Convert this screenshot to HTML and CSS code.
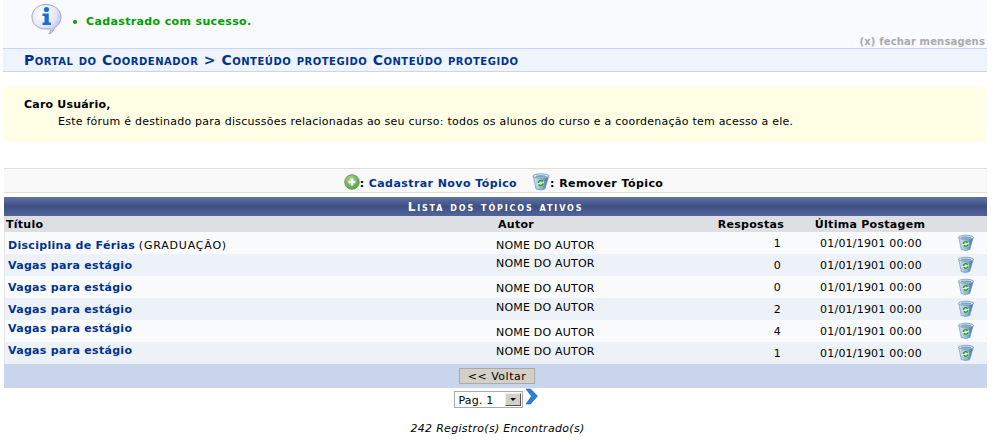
FILE: index.html
```html
<!DOCTYPE html>
<html lang="pt-BR">
<head>
    <meta charset="UTF-8">
    <title>Portal do Coordenador</title>
    <link rel="stylesheet" href="styles.css">
</head>
<body>
    <svg class="icon-defs" width="0" height="0">
        <defs>
            <linearGradient id="binBody" x1="0" y1="0" x2="1" y2="0">
                <stop offset="0" stop-color="#d5e6f2"/>
                <stop offset="0.55" stop-color="#8ab6dc"/>
                <stop offset="1" stop-color="#35679c"/>
            </linearGradient>
            <radialGradient id="bubble" cx="0.35" cy="0.3" r="0.8">
                <stop offset="0" stop-color="#ffffff"/>
                <stop offset="0.6" stop-color="#e4e6f8"/>
                <stop offset="1" stop-color="#a9aee0"/>
            </radialGradient>
            <radialGradient id="greenBall" cx="0.4" cy="0.3" r="0.8">
                <stop offset="0" stop-color="#a5d890"/>
                <stop offset="1" stop-color="#4e9a3c"/>
            </radialGradient>
            <symbol id="bin" viewBox="0 0 17 18">
                <path d="M0.800 3 L3.500 16 Q8 18 12.500 16 L16.200 3 Z" fill="url(#binBody)" stroke="#6d93b5" stroke-width="0.7"/>
                <ellipse cx="8.500" cy="3" rx="8" ry="2.200" fill="#dcebf5" stroke="#6d93b5" stroke-width="0.8"/>
                <ellipse cx="8.500" cy="3.300" rx="5.800" ry="1.200" fill="#7fa3bf"/>
                <circle cx="8.200" cy="10" r="3.400" fill="#dff0e0"/>
                <path d="M5.800 10 A2.500 2.500 0 0 1 10.400 8.700 M10.600 10.300 A2.500 2.500 0 0 1 6.100 11.500" fill="none" stroke="#2f9e33" stroke-width="1.800"/>
            </symbol>
        </defs>
    </svg>

    <div class="container">
        <div class="messages">
            <svg class="info-icon" width="32" height="32" viewBox="0 0 32 32">
                <path d="M15 1.500 C23.500 1.500 30 7 30 14 C30 19 27 22.500 23.500 24.500 C23 27 21.500 30 18 31 C19.500 29 19.500 27 19 25.800 C17.800 26 16.400 26 15 26 C7 26 1 21 1 14 C1 7 7 1.500 15 1.500 Z" fill="url(#bubble)" stroke="#a4a6c0" stroke-width="1"/>
                <circle cx="15.500" cy="6.500" r="2.600" fill="#1a6fd0"/>
                <path d="M11.500 10.500 H17.800 V19.500 H20 V22 H11.500 V19.500 H13.500 V13 H11.500 Z" fill="#1a6fd0"/>
            </svg>
            <ul class="message-list">
                <li>Cadastrado com sucesso.</li>
            </ul>
            <a class="close-messages" href="#">(x) fechar mensagens</a>
        </div>

        <h2 class="page-title">Portal do Coordenador &gt; Conteúdo protegido Conteúdo protegido</h2>

        <div class="notice">
            <p class="notice-title">Caro Usuário,</p>
            <p class="notice-text">Este fórum é destinado para discussões relacionadas ao seu curso: todos os alunos do curso e a coordenação tem acesso a ele.</p>
        </div>

        <div class="actions">
            <svg class="plus-icon" width="16" height="16" viewBox="0 0 16 16">
                <circle cx="8" cy="8" r="7.300" fill="url(#greenBall)" stroke="#5c8f50" stroke-width="0.8"/>
                <path d="M8 4.500 V11.500 M4.500 8 H11.500" stroke="#ffffff" stroke-width="2.400"/>
            </svg>
            <span class="action-text">: <a href="#">Cadastrar Novo Tópico</a></span>
            <svg class="bin-large" width="18" height="18"><use href="#bin"/></svg>
            <span class="action-text">: Remover Tópico</span>
        </div>

        <table class="topics">
            <caption>Lista dos tópicos ativos</caption>
            <colgroup>
                <col class="col-title">
                <col class="col-author">
                <col class="col-replies">
                <col class="col-date">
                <col class="col-icon">
            </colgroup>
            <thead>
                <tr>
                    <th class="title-head">Título</th>
                    <th class="author-head">Autor</th>
                    <th class="replies-head">Respostas</th>
                    <th>Última Postagem</th>
                    <th></th>
                </tr>
            </thead>
            <tbody>
                <tr>
                    <td class="lower"><a href="#">Disciplina de Férias</a> <span class="level">(GRADUAÇÃO)</span></td>
                    <td class="lower">NOME DO AUTOR</td>
                    <td class="replies">1</td>
                    <td class="date">01/01/1901 00:00</td>
                    <td class="bin-cell"><svg width="16" height="18"><use href="#bin"/></svg></td>
                </tr>
                <tr class="even">
                    <td><a href="#">Vagas para estágio</a></td>
                    <td class="high">NOME DO AUTOR</td>
                    <td class="replies">0</td>
                    <td class="date">01/01/1901 00:00</td>
                    <td class="bin-cell"><svg width="16" height="18"><use href="#bin"/></svg></td>
                </tr>
                <tr>
                    <td><a href="#">Vagas para estágio</a></td>
                    <td class="low">NOME DO AUTOR</td>
                    <td class="replies">0</td>
                    <td class="date">01/01/1901 00:00</td>
                    <td class="bin-cell"><svg width="16" height="18"><use href="#bin"/></svg></td>
                </tr>
                <tr class="even">
                    <td><a href="#">Vagas para estágio</a></td>
                    <td class="high">NOME DO AUTOR</td>
                    <td class="replies">2</td>
                    <td class="date">01/01/1901 00:00</td>
                    <td class="bin-cell"><svg width="16" height="18"><use href="#bin"/></svg></td>
                </tr>
                <tr>
                    <td class="higher"><a href="#">Vagas para estágio</a></td>
                    <td class="low">NOME DO AUTOR</td>
                    <td class="replies">4</td>
                    <td class="date">01/01/1901 00:00</td>
                    <td class="bin-cell"><svg width="16" height="18"><use href="#bin"/></svg></td>
                </tr>
                <tr class="even">
                    <td class="higher"><a href="#">Vagas para estágio</a></td>
                    <td class="high">NOME DO AUTOR</td>
                    <td class="replies">1</td>
                    <td class="date">01/01/1901 00:00</td>
                    <td class="bin-cell"><svg width="16" height="18"><use href="#bin"/></svg></td>
                </tr>
            </tbody>
            <tfoot>
                <tr>
                    <td colspan="5"><button class="back-button">&lt;&lt; Voltar</button></td>
                </tr>
            </tfoot>
        </table>

        <div class="pager">
            <div class="page-select">
                <span class="page-value">Pag. 1</span>
                <span class="page-arrow"></span>
            </div>
            <svg class="next-icon" width="13" height="17" viewBox="0 0 13 17">
                <path d="M1 1 H5.500 L12.500 8 L5.500 16 H1 L6.500 8.200 Z" fill="#2a7fd8" stroke="#1b5da8" stroke-width="0.6"/>
            </svg>
        </div>

        <p class="records">242 Registro(s) Encontrado(s)</p>
    </div>
</body>
</html>
```

FILE: styles.css
```css
* {
    margin: 0;
    padding: 0;
    box-sizing: border-box;
}

body {
    font-family: "DejaVu Sans", Verdana, sans-serif;
    font-size: 11px;
    letter-spacing: 0.2px;
    color: #000;
    background-color: #fff;
}

a {
    color: #003390;
    text-decoration: none;
}

.icon-defs {
    display: block;
    height: 0;
}

.container {
    width: 984px;
    margin-left: 3px;
}

/* Messages */
.messages {
    display: flex;
    height: 48px;
    padding: 3px 2px 0 28px;
    background-color: #f9fafd;
}

.info-icon {
    flex-shrink: 0;
}

.message-list {
    flex: 1;
    margin: 12px 0 0 10px;
    color: #00a000;
    font-weight: bold;
    letter-spacing: 0.36px;
    list-style: none;
}

.message-list li {
    display: flex;
    align-items: center;
    gap: 9px;
}

.message-list li::before {
    content: "";
    width: 4px;
    height: 4px;
    border-radius: 50%;
    background-color: #00a000;
}

.close-messages {
    align-self: flex-end;
    margin-bottom: 1px;
    color: #aaa;
    font-size: 10px;
    font-weight: bold;
    letter-spacing: 0.15px;
}

/* Title */
.page-title {
    height: 24px;
    padding: 3px 0 0 21px;
    background-color: #eff3fb;
    border-top: 1px solid #c8d5ec;
    border-bottom: 1px solid #c8d5ec;
    color: #003390;
    font-size: 14px;
    font-weight: bold;
    font-variant: small-caps;
    letter-spacing: 0.52px;
}

/* Notice */
.notice {
    width: 983px;
    height: 55px;
    margin-top: 15px;
    padding: 11px 21px;
    background-color: #ffffe6;
}

.notice-title {
    font-weight: bold;
    line-height: 14px;
}

.notice-text {
    margin-top: 3px;
    padding-left: 34px;
    line-height: 14px;
    letter-spacing: 0.24px;
}

/* Actions */
.actions {
    display: flex;
    justify-content: center;
    align-items: center;
    height: 25px;
    margin: 26px 0 0 1px;
    padding: 2px 0 0 16px;
    background-color: #f9f9f9;
    border-top: 1px solid #ddd;
    border-bottom: 1px solid #ddd;
    font-weight: bold;
}

.action-text {
    margin-top: 3px;
    letter-spacing: 0.43px;
}

.bin-large {
    margin-left: 15px;
}

/* Topics */
.topics {
    width: 983px;
    margin: 4px 0 0 1px;
    border-collapse: separate;
    border-spacing: 0;
    table-layout: fixed;
}

.topics caption {
    height: 19px;
    padding-top: 3px;
    background: linear-gradient(#5f73a3, #3f4f82 50%, #52659a);
    color: #fff;
    font-size: 12px;
    line-height: 15px;
    font-weight: bold;
    font-variant: small-caps;
    letter-spacing: 1.85px;
}

.col-title { width: 490px; }
.col-author { width: 206px; }
.col-replies { width: 95px; }
.col-date { width: 150px; }
.col-icon { width: 42px; }

.topics th {
    height: 16px;
    background-color: #dedfe3;
    font-weight: bold;
    letter-spacing: 0.28px;
}

.title-head {
    padding-left: 2px;
    text-align: left;
}

.author-head {
    padding-left: 4px;
    text-align: left;
}

.replies-head {
    padding-right: 11px;
    text-align: right;
}

.topics tbody td {
    height: 22px;
    padding-left: 2px;
    background-color: #f9fbfd;
    vertical-align: middle;
}

.topics tbody tr.even td {
    background-color: #edf1f8;
}

.topics tbody td:first-child {
    padding-left: 3px;
    border-left: 1px solid #e4e6ec;
}

.topics tbody a {
    font-weight: bold;
    letter-spacing: 0.3px;
}

.level {
    letter-spacing: 0.8px;
}

.topics tbody td.higher {
    padding-bottom: 6px;
}

.topics tbody td.high {
    padding-bottom: 4px;
}

.topics tbody td.low {
    padding-top: 3px;
}

.topics tbody td.lower {
    padding-top: 4px;
}

.topics tbody td.replies {
    padding-right: 14px;
    text-align: right;
}

.topics tbody td.date {
    text-align: center;
}

.topics tbody td.bin-cell {
    padding-left: 0;
    text-align: center;
}

.bin-cell svg {
    display: block;
    margin: 0 auto;
}

.topics tfoot td {
    height: 24px;
    padding-left: 3px;
    background-color: #c8d5ec;
    text-align: center;
    vertical-align: middle;
}

.back-button {
    display: block;
    width: 76px;
    height: 16px;
    margin: 0 auto;
    background-color: #d4d0c8;
    border: 1px solid #aaa;
    font-family: inherit;
    font-size: 11px;
    letter-spacing: 0.5px;
}

/* Pager */
.pager {
    display: flex;
    justify-content: center;
    align-items: flex-start;
    gap: 2px;
    padding-left: 1px;
}

.page-select {
    display: flex;
    align-items: center;
    width: 69px;
    height: 17px;
    margin-top: 3px;
    padding: 1px;
    background-color: #fff;
    border: 1px solid #aaa;
}

.page-value {
    flex: 1;
    padding: 1px 0 0 3px;
}

.page-arrow {
    position: relative;
    width: 16px;
    height: 13px;
    background-color: #d4d0c8;
    border: 1px solid;
    border-color: #eee #555 #555 #eee;
}

.page-arrow::after {
    content: "";
    position: absolute;
    left: 4px;
    top: 4px;
    border-left: 3px solid transparent;
    border-right: 3px solid transparent;
    border-top: 3px solid #000;
}

.records {
    margin-top: 14px;
    padding-left: 5px;
    font-style: italic;
    letter-spacing: 0.3px;
    text-align: center;
}
```
